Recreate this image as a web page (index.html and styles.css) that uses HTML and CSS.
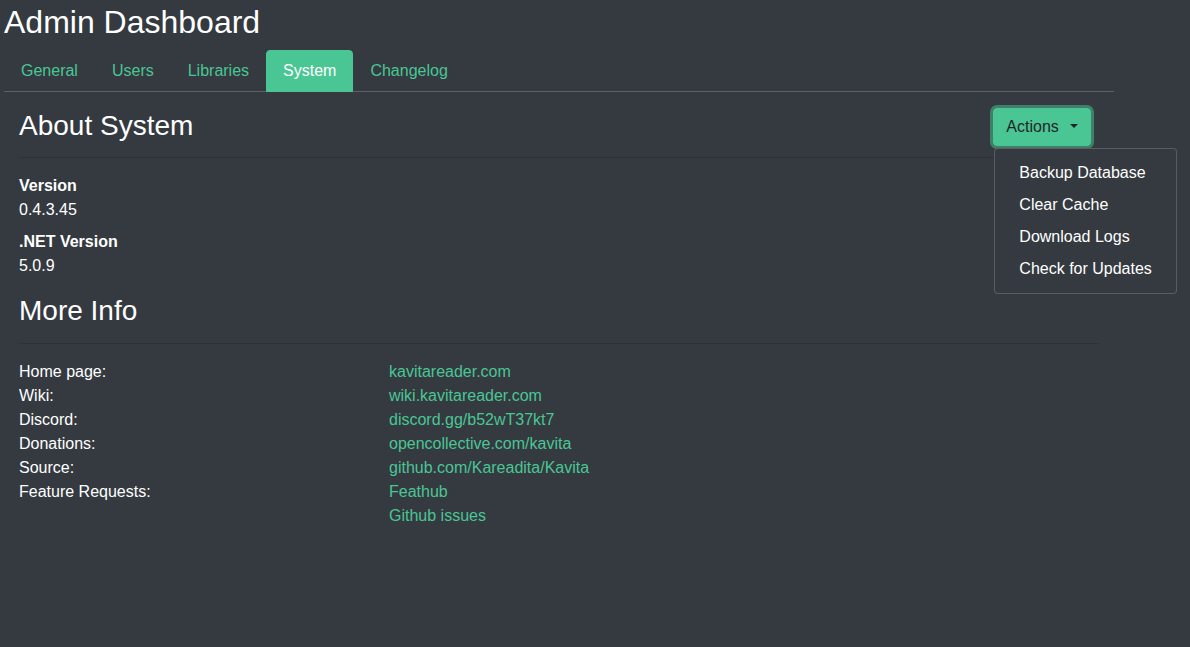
FILE: index.html
```html
<!DOCTYPE html>
<html lang="en">
<head>
<meta charset="utf-8">
<title>Admin Dashboard</title>
<link rel="stylesheet" href="styles.css">
</head>
<body>
<div class="container">
  <h1 class="page-title">Admin Dashboard</h1>
  <ul class="tabs">
    <li><a class="tab" href="#">General</a></li>
    <li><a class="tab" href="#">Users</a></li>
    <li><a class="tab" href="#">Libraries</a></li>
    <li><a class="tab active" href="#">System</a></li>
    <li><a class="tab" href="#">Changelog</a></li>
  </ul>
  <div class="tab-content">
    <div class="section-header">
      <h3 class="section-title">About System</h3>
      <div class="dropdown">
        <button class="btn-actions" type="button">Actions<span class="caret"></span></button>
        <div class="dropdown-menu">
          <a class="dropdown-item" href="#">Backup Database</a>
          <a class="dropdown-item" href="#">Clear Cache</a>
          <a class="dropdown-item" href="#">Download Logs</a>
          <a class="dropdown-item" href="#">Check for Updates</a>
        </div>
      </div>
    </div>
    <hr class="divider first">
    <div class="info-block">
      <div class="info-label">Version</div>
      <div class="info-value">0.4.3.45</div>
    </div>
    <div class="info-block">
      <div class="info-label">.NET Version</div>
      <div class="info-value">5.0.9</div>
    </div>
    <h3 class="section-title more">More Info</h3>
    <hr class="divider second">
    <div class="links">
      <div class="link-label">Home page:</div><div><a class="link" href="#">kavitareader.com</a></div>
      <div class="link-label">Wiki:</div><div><a class="link" href="#">wiki.kavitareader.com</a></div>
      <div class="link-label">Discord:</div><div><a class="link" href="#">discord.gg/b52wT37kt7</a></div>
      <div class="link-label">Donations:</div><div><a class="link" href="#">opencollective.com/kavita</a></div>
      <div class="link-label">Source:</div><div><a class="link" href="#">github.com/Kareadita/Kavita</a></div>
      <div class="link-label">Feature Requests:</div><div><a class="link" href="#">Feathub</a></div>
      <div class="link-label"></div><div><a class="link" href="#">Github issues</a></div>
    </div>
  </div>
</div>
</body>
</html>
```
FILE: styles.css
```css
html, body {
  margin: 0;
  padding: 0;
  background: #343a40;
  color: #fff;
  font-family: "Liberation Sans", Arial, sans-serif;
  font-size: 16px;
  line-height: 1.5;
  height: 100%;
}

.container {
  width: 1110px;
  margin-left: 4px;
}

.page-title {
  font-size: 32px;
  font-weight: 400;
  line-height: 1.2;
  margin: 3px 0 9px 0;
}

.tabs {
  list-style: none;
  margin: 0;
  padding: 0;
  display: flex;
  border-bottom: 1px solid #5c6168;
}

.tabs li {
  margin-bottom: -1px;
}

.tab {
  display: block;
  padding: 8px 16px;
  border: 1px solid transparent;
  border-radius: 4px 4px 0 0;
  color: #4ac694;
  text-decoration: none;
}

.tab.active {
  background: #4ac694;
  border-color: #4ac694;
  color: #fff;
}

.tab-content {
  padding: 15px 15px 0 15px;
}

.section-header {
  display: flex;
  justify-content: space-between;
  align-items: flex-start;
}

.section-title {
  font-size: 28px;
  font-weight: 400;
  line-height: 1.2;
  margin: 0;
}

.section-header .section-title {
  margin-top: 2px;
}

.section-title.more {
  margin-top: 16px;
}

.dropdown {
  position: relative;
  margin-right: 8px;
  margin-top: 1px;
  margin-bottom: -8px;
}

.btn-actions {
  display: block;
  font-family: inherit;
  font-size: 16px;
  line-height: 1.5;
  padding: 6px 12px;
  color: #212529;
  background: #4ac694;
  border: 1px solid #4ac694;
  border-radius: 4px;
  box-shadow: 0 0 0 3px rgba(74, 198, 148, 0.5);
  cursor: pointer;
}

.caret {
  display: inline-block;
  margin-left: 0.7em;
  vertical-align: 0.255em;
  border-top: 0.3em solid #212529;
  border-right: 0.3em solid transparent;
  border-left: 0.3em solid transparent;
}

.dropdown-menu {
  position: absolute;
  top: calc(100% + 2px);
  left: 1px;
  padding: 8px 0;
  background: #343a40;
  border: 1px solid rgba(255, 255, 255, 0.18);
  border-radius: 4px;
  white-space: nowrap;
  z-index: 10;
}

.dropdown-item {
  display: block;
  padding: 4px 24px;
  color: #fff;
  text-decoration: none;
}

.divider {
  border: 0;
  border-top: 1px solid rgba(0, 0, 0, 0.12);
  margin: 16px 0;
}

.divider.first {
  margin-top: 14px;
}

.divider.second {
  margin-top: 15px;
}

.info-block {
  margin-bottom: 8px;
}

.info-label {
  font-weight: 700;
}

.links {
  display: grid;
  grid-template-columns: 370px 1fr;
}

.link {
  color: #4ac694;
  text-decoration: none;
}
```
